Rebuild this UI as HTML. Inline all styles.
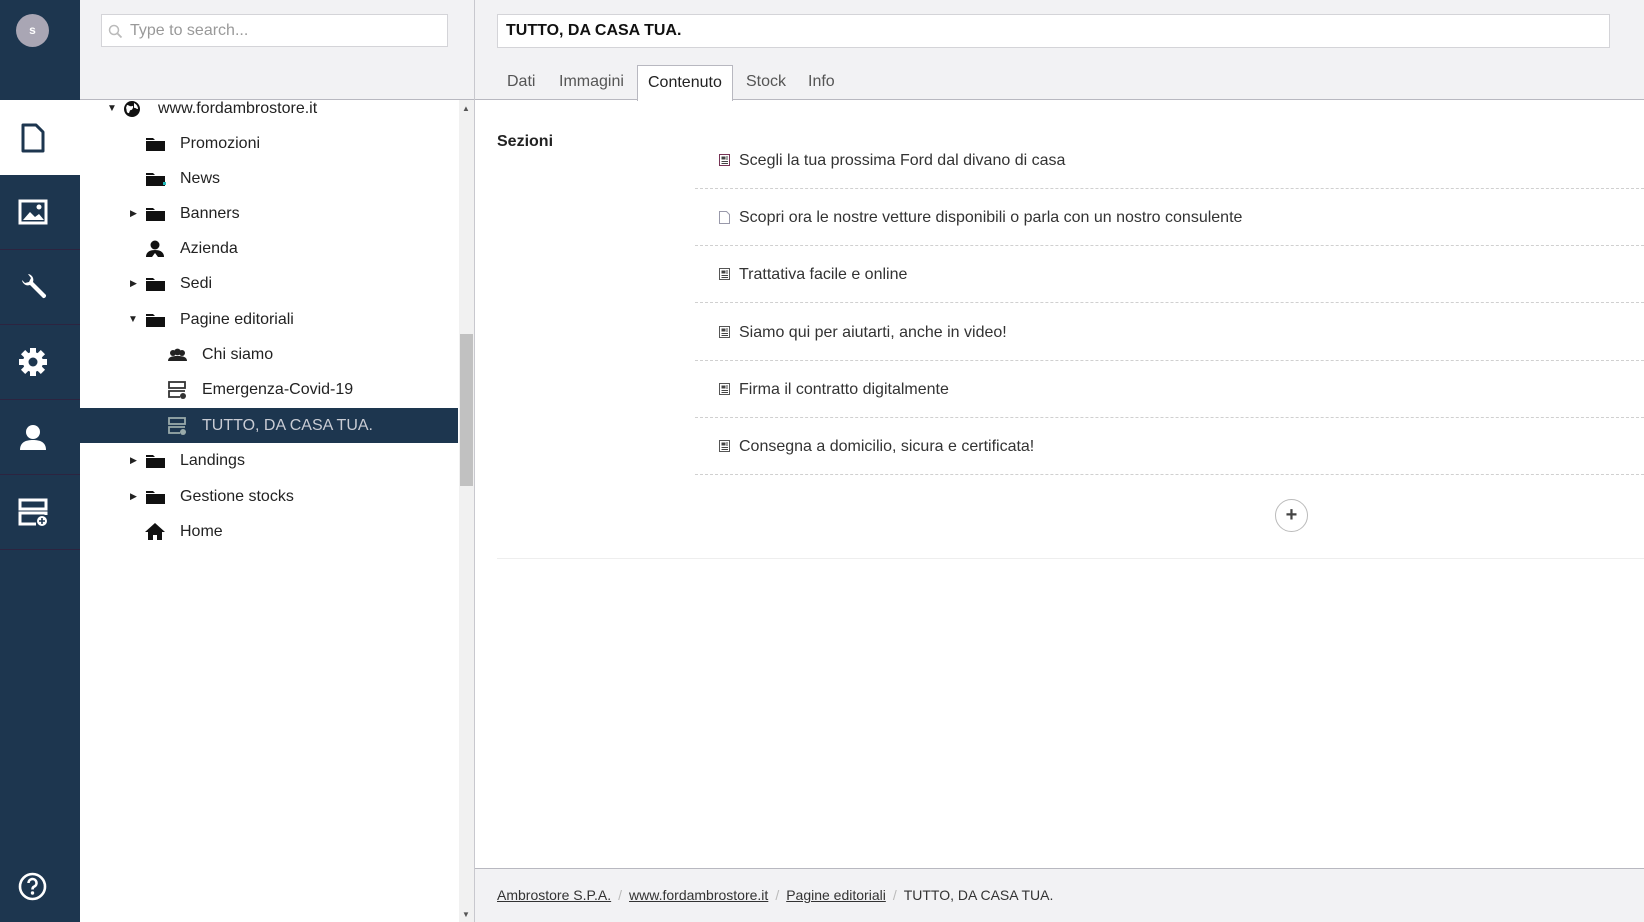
<!DOCTYPE html>
<html><head><meta charset="utf-8"><style>
*{box-sizing:border-box;margin:0;padding:0}
body{width:1644px;height:922px;overflow:hidden;font-family:"Liberation Sans",sans-serif;background:#fff;color:#222;position:relative}
.nav{position:absolute;left:0;top:0;width:80px;height:922px;background:#1d364f}
.av{position:absolute;left:16px;top:14px;width:33px;height:33px;border-radius:50%;background:#a9a6b4;color:#fff;font-size:12px;font-weight:bold;text-align:center;line-height:33px}
.ni{position:absolute;left:0;width:80px;height:75px;border-bottom:1px solid #2c2440}
.ni svg{position:absolute;left:50%;top:50%;transform:translate(-50%,-50%);margin-left:-7px}
.ni.act{background:#fff}
.tree{position:absolute;left:80px;top:0;width:395px;height:922px;background:#fff;border-right:1px solid #c8c8ce}
.treetop{position:absolute;left:0;top:0;width:394px;height:100px;background:#f2f2f4;border-bottom:1px solid #b8b8c0}
.search{position:absolute;left:21px;top:14px;width:347px;height:33px;background:#fff;border:1px solid #d4d4d8;color:#999;font-size:16px;line-height:31px;padding-left:28px}
.row{position:absolute;left:0;width:378px;height:35px;font-size:16px;line-height:35px;color:#222}
.row.sel{background:#1d364f;color:#c9ccd4}
.row span{position:absolute}
.row svg.f{position:absolute;left:66px;top:10px}
.sb{position:absolute;left:379px;top:100px;width:15px;height:822px;background:#f1f1f1}
.thumb{position:absolute;left:380px;top:334px;width:13px;height:152px;background:#c1c1c1}
.main{position:absolute;left:475px;top:0;right:0;height:922px}
.mtop{position:absolute;left:0;top:0;right:0;height:100px;background:#f2f2f4;border-bottom:1px solid #b8b8c0}
.title{position:absolute;left:22px;top:14px;width:1113px;height:34px;background:#fff;border:1px solid #d4d4d8;font-weight:bold;font-size:16px;line-height:32px;padding-left:8px;color:#111}
.tab{position:absolute;top:65px;height:35px;font-size:16px;line-height:34px;color:#555}
.tab.on{background:#fff;border:1px solid #b8b8c0;border-bottom:none;color:#222;height:36px;padding:0 10px}
.sez{position:absolute;left:22px;top:133px;font-weight:bold;font-size:16px}
.it{position:absolute;left:220px;right:0;height:57px;border-bottom:1px dashed #d0d0d0;font-size:16px;color:#333;line-height:57px}
.it span{position:absolute;left:44px;top:0}
.it svg{position:absolute;left:24px;top:22px}
.plus{position:absolute;left:800px;top:499px;width:33px;height:33px;border:1px solid #bbb;border-radius:50%;text-align:center;line-height:30px;font-size:20px;font-weight:bold;color:#444}
.hl{position:absolute;left:22px;right:0;top:558px;border-top:1px solid #eee}
.foot{position:absolute;left:0;right:0;top:868px;height:54px;background:#f2f2f4;border-top:1px solid #b8b8c0;font-size:14px;color:#333;padding:18px 0 0 22px}
.foot a{color:#333;text-decoration:underline}
.foot i{font-style:normal;color:#bbb;margin:0 7px}
</style></head><body>
<div class="nav">
<div class="av">s</div>
<div class="ni act" style="top:100px;border:none"><svg width="26" height="30" viewBox="0 0 26 30"><path d="M3 2h13l7 7v19H3z" fill="none" stroke="#1d364f" stroke-width="3" stroke-linejoin="round"/></svg></div>
<div class="ni" style="top:175px"><svg width="30" height="26" viewBox="0 0 30 26"><rect x="2" y="2" width="26" height="22" fill="none" stroke="#fff" stroke-width="3"/><path d="M5 21l7-8 5 5 4-3 5 6z" fill="#fff"/><circle cx="21" cy="8" r="2.5" fill="#fff"/></svg></div>
<div class="ni" style="top:250px"><svg width="30" height="30" viewBox="0 0 30 30"><path d="M4 8a6 6 0 0 0 8 5l13 13a2.5 2.5 0 0 0 3-3L15 10a6 6 0 0 0-5-8l3 4-2 4-4 1z" fill="#fff"/></svg></div>
<div class="ni" style="top:325px"><svg width="30" height="30" viewBox="0 0 30 30"><g fill="#fff"><circle cx="15" cy="15" r="10"/><rect x="12" y="1" width="6" height="28"/><rect x="1" y="12" width="28" height="6"/><rect x="12" y="1" width="6" height="28" transform="rotate(45 15 15)"/><rect x="12" y="1" width="6" height="28" transform="rotate(-45 15 15)"/></g><circle cx="15" cy="15" r="4.5" fill="#1d364f"/></svg></div>
<div class="ni" style="top:400px"><svg width="30" height="30" viewBox="0 0 30 30"><circle cx="15" cy="10" r="7" fill="#fff"/><path d="M2 28c0-8 6-10 13-10s13 2 13 10z" fill="#fff"/></svg></div>
<div class="ni" style="top:475px"><svg width="30" height="30" viewBox="0 0 30 30"><rect x="2" y="3" width="26" height="9" fill="none" stroke="#fff" stroke-width="3"/><path d="M18 27H2V16h26v2" fill="none" stroke="#fff" stroke-width="3"/><circle cx="24" cy="24" r="5" fill="#fff"/><path d="M24 21v6M21 24h6" stroke="#1d364f" stroke-width="1.6"/></svg></div>
<svg style="position:absolute;left:18px;top:872px" width="29" height="29" viewBox="0 0 29 29"><circle cx="14.5" cy="14.5" r="12.5" fill="none" stroke="#fff" stroke-width="2.6"/><path d="M10.5 11a4 4 0 1 1 5.5 3.7c-1.2.6-1.5 1.3-1.5 2.8" fill="none" stroke="#fff" stroke-width="2.6"/><circle cx="14.5" cy="21" r="1.7" fill="#fff"/></svg>
</div>

<div class="tree">
<div class="treetop"><div class="search"><svg style="position:absolute;left:6px;top:9px" width="15" height="15" viewBox="0 0 15 15"><circle cx="6" cy="6" r="4.5" fill="none" stroke="#bbb" stroke-width="1.5"/><path d="M9.5 9.5l4 4" stroke="#bbb" stroke-width="1.8"/></svg>Type to search...</div></div>
<div class="row" style="top:91px"><span style="left:27px;font-size:10px">▼</span><svg style="position:absolute;left:43px;top:9px" width="18" height="18" viewBox="0 0 18 18"><circle cx="9" cy="9" r="8" fill="#111"/><path d="M4 5c2 0 3 2 5 1s1 4-1 4-1 4-3 3-1-4-2-5zM11 3c2 1 4 3 4 6-2 0-3-2-4-1z" fill="#fff"/></svg><span style="left:78px">www.fordambrostore.it</span></div>
<div class="row" style="top:126px"><svg class="f" width="19" height="15"><path d="M0 2h7l2 2h10v11H0z" fill="#111"/><rect x="0" y="4" width="19" height="1" fill="#fff"/></svg><span style="left:100px">Promozioni</span></div>
<div class="row" style="top:161px"><svg class="f" width="20" height="15"><path d="M0 2h7l2 2h10v11H0z" fill="#111"/><rect x="0" y="4" width="19" height="1" fill="#fff"/><rect x="17" y="11" width="3" height="3" fill="#2bb"/></svg><span style="left:100px">News</span></div>
<div class="row" style="top:196px"><span style="left:50px;font-size:9px">▶</span><svg class="f" width="19" height="15"><path d="M0 2h7l2 2h10v11H0z" fill="#111"/><rect x="0" y="4" width="19" height="1" fill="#fff"/></svg><span style="left:100px">Banners</span></div>
<div class="row" style="top:231px"><svg style="position:absolute;left:66px;top:9px" width="18" height="17" viewBox="0 0 18 17"><circle cx="9" cy="5" r="4.5" fill="#111"/><path d="M0 17c0-5 4-7 9-7s9 2 9 7h-6l-3-4-3 4z" fill="#111"/></svg><span style="left:100px">Azienda</span></div>
<div class="row" style="top:266px"><span style="left:50px;font-size:9px">▶</span><svg class="f" width="19" height="15"><path d="M0 2h7l2 2h10v11H0z" fill="#111"/><rect x="0" y="4" width="19" height="1" fill="#fff"/></svg><span style="left:100px">Sedi</span></div>
<div class="row" style="top:302px"><span style="left:48px;font-size:10px">▼</span><svg class="f" width="19" height="15"><path d="M0 2h7l2 2h10v11H0z" fill="#111"/><rect x="0" y="4" width="19" height="1" fill="#fff"/></svg><span style="left:100px">Pagine editoriali</span></div>
<div class="row" style="top:337px"><svg style="position:absolute;left:88px;top:11px" width="19" height="14" viewBox="0 0 19 14"><circle cx="5" cy="5" r="3" fill="#222"/><circle cx="14" cy="5" r="3" fill="#222"/><circle cx="9.5" cy="4" r="3.4" fill="#222"/><path d="M0 13c0-4 4-5 9.5-5s9.5 1 9.5 5z" fill="#222"/></svg><span style="left:122px">Chi siamo</span></div>
<div class="row" style="top:372px"><svg style="position:absolute;left:88px;top:9px" width="19" height="18" viewBox="0 0 19 18"><rect x="1" y="1" width="16" height="6" fill="none" stroke="#333" stroke-width="1.8"/><path d="M12 16H1V10h16" fill="none" stroke="#333" stroke-width="1.8"/><circle cx="15" cy="15" r="3" fill="#333"/></svg><span style="left:122px">Emergenza-Covid-19</span></div>
<div class="row sel" style="top:408px"><svg style="position:absolute;left:88px;top:9px" width="19" height="18" viewBox="0 0 19 18"><rect x="1" y="1" width="16" height="6" fill="none" stroke="#9aa" stroke-width="1.8"/><path d="M12 16H1V10h16" fill="none" stroke="#9aa" stroke-width="1.8"/><circle cx="15" cy="15" r="3" fill="#9aa"/></svg><span style="left:122px">TUTTO, DA CASA TUA.</span></div>
<div class="row" style="top:443px"><span style="left:50px;font-size:9px">▶</span><svg class="f" width="19" height="15"><path d="M0 2h7l2 2h10v11H0z" fill="#111"/><rect x="0" y="4" width="19" height="1" fill="#fff"/></svg><span style="left:100px">Landings</span></div>
<div class="row" style="top:479px"><span style="left:50px;font-size:9px">▶</span><svg class="f" width="19" height="15"><path d="M0 2h7l2 2h10v11H0z" fill="#111"/><rect x="0" y="4" width="19" height="1" fill="#fff"/></svg><span style="left:100px">Gestione stocks</span></div>
<div class="row" style="top:514px"><svg style="position:absolute;left:65px;top:8px" width="20" height="18" viewBox="0 0 20 18"><path d="M10 1L0 10h3v8h5v-5h4v5h5v-8h3z" fill="#111"/></svg><span style="left:100px">Home</span></div>
<div class="sb"></div><div class="thumb"></div>
<div style="position:absolute;left:382px;top:104px;font-size:8px;color:#555">▲</div>
<div style="position:absolute;left:382px;top:910px;font-size:8px;color:#555">▼</div>
</div>

<div class="main">
<div class="mtop">
<div class="title">TUTTO, DA CASA TUA.</div>
<div class="tab" style="left:32px">Dati</div>
<div class="tab" style="left:84px">Immagini</div>
<div class="tab on" style="left:162px">Contenuto</div>
<div class="tab" style="left:271px">Stock</div>
<div class="tab" style="left:333px">Info</div>
</div>
<div class="sez">Sezioni</div>
<div class="it" style="top:132px"><svg width="11" height="12"><rect x=".5" y=".5" width="10" height="11" fill="#fff" stroke="#735"/><rect x="2.5" y="2.5" width="4" height="3" fill="#444"/><path d="M7 3h2M7 5h2M2.5 7.5h6.5M2.5 9.5h6.5" stroke="#444"/></svg><span>Scegli la tua prossima Ford dal divano di casa</span></div>
<div class="it" style="top:189px"><svg width="11" height="13"><path d="M.5.5h7l3 3v9H.5z" fill="#fff" stroke="#99a"/></svg><span>Scopri ora le nostre vetture disponibili o parla con un nostro consulente</span></div>
<div class="it" style="top:246px"><svg width="11" height="12"><rect x=".5" y=".5" width="10" height="11" fill="#fff" stroke="#555"/><rect x="2.5" y="2.5" width="4" height="3" fill="#444"/><path d="M7 3h2M7 5h2M2.5 7.5h6.5M2.5 9.5h6.5" stroke="#444"/></svg><span>Trattativa facile e online</span></div>
<div class="it" style="top:304px"><svg width="11" height="12"><rect x=".5" y=".5" width="10" height="11" fill="#fff" stroke="#555"/><rect x="2.5" y="2.5" width="4" height="3" fill="#444"/><path d="M7 3h2M7 5h2M2.5 7.5h6.5M2.5 9.5h6.5" stroke="#444"/></svg><span>Siamo qui per aiutarti, anche in video!</span></div>
<div class="it" style="top:361px"><svg width="11" height="12"><rect x=".5" y=".5" width="10" height="11" fill="#fff" stroke="#555"/><rect x="2.5" y="2.5" width="4" height="3" fill="#444"/><path d="M7 3h2M7 5h2M2.5 7.5h6.5M2.5 9.5h6.5" stroke="#444"/></svg><span>Firma il contratto digitalmente</span></div>
<div class="it" style="top:418px"><svg width="11" height="12"><rect x=".5" y=".5" width="10" height="11" fill="#fff" stroke="#555"/><rect x="2.5" y="2.5" width="4" height="3" fill="#444"/><path d="M7 3h2M7 5h2M2.5 7.5h6.5M2.5 9.5h6.5" stroke="#444"/></svg><span>Consegna a domicilio, sicura e certificata!</span></div>
<div class="plus">+</div>
<div class="hl"></div>
<div class="foot"><a>Ambrostore S.P.A.</a><i>/</i><a>www.fordambrostore.it</a><i>/</i><a>Pagine editoriali</a><i>/</i>TUTTO, DA CASA TUA.</div>
</div>
</body></html>
